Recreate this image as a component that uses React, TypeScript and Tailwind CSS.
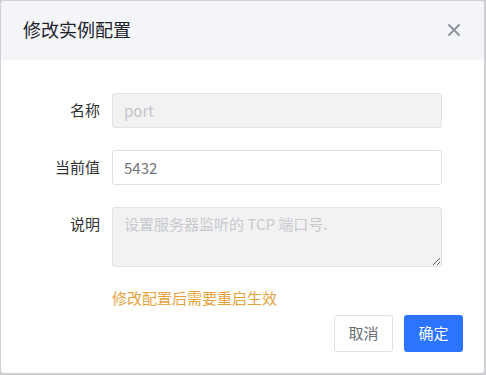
import React from 'react';

const font = { fontFamily: '"Noto Sans CJK SC", "Noto Sans", sans-serif' };

const Row: React.FC<{ label: string; children: React.ReactNode }> = ({ label, children }) => (
  <div className="flex items-start">
    <div className="w-[100px] h-[35px] flex items-center justify-end pr-px text-[15px] text-[#303133]">{label}</div>
    <div className="ml-[11px] w-[330px]">{children}</div>
  </div>
);

export default function App() {
  return (
    <div className="w-[486px] h-[375px] bg-[#cfd0d3] pl-px pt-px pr-[2px] pb-[2px]" style={font}>
      <div className="w-full h-full bg-white rounded-[3px] overflow-hidden flex flex-col">
        <div className="h-[59px] shrink-0 bg-[#f3f5f9] flex items-center justify-between pl-[22px] pr-[24px]">
          <span className="text-[18px] text-[#1d2129] -mt-[3px]">修改实例配置</span>
          <svg width="12" height="12" viewBox="0 0 12 12" className="-mt-[1px]">
            <path d="M1 1L11 11M11 1L1 11" stroke="#8c9099" strokeWidth="1.8" strokeLinecap="round" />
          </svg>
        </div>

        <div className="flex flex-col pt-[33px]">
          <Row label="名称">
            <input
              disabled
              value="port"
              className="w-full h-[35px] rounded-[3px] border border-[#e2e3e8] bg-[#f2f2f2] px-[11px] text-[15px] text-[#c3c5cb] outline-none"
            />
          </Row>
          <div className="h-[22px]" />
          <Row label="当前值">
            <input
              readOnly
              value="5432"
              className="w-full h-[35px] rounded-[3px] border border-[#dfe1e8] bg-white px-[11px] text-[15px] text-[#72757c] outline-none"
            />
          </Row>
          <div className="h-[22px]" />
          <Row label="说明">
            <textarea
              readOnly
              placeholder="设置服务器监听的 TCP 端口号."
              className="block w-full h-[60px] rounded-[3px] border border-[#e2e3e8] bg-[#f2f2f2] px-[11px] py-[6px] text-[15px] leading-[20px] placeholder:text-[#c8cad0] outline-none"
            />
          </Row>
          <div className="ml-[111px] mt-[21px] text-[15px] leading-[20px] text-[#e6a23c]">修改配置后需要重启生效</div>
          <div className="flex justify-end gap-[11px] pr-[21px] mt-[7px]">
            <button className="w-[59px] h-[37px] rounded-[3px] border border-[#dfe1e8] bg-white text-[15px] text-[#6b6e75]">取消</button>
            <button className="w-[59px] h-[37px] rounded-[3px] bg-[#2a74ff] text-[15px] text-white">确定</button>
          </div>
        </div>
      </div>
    </div>
  );
}
